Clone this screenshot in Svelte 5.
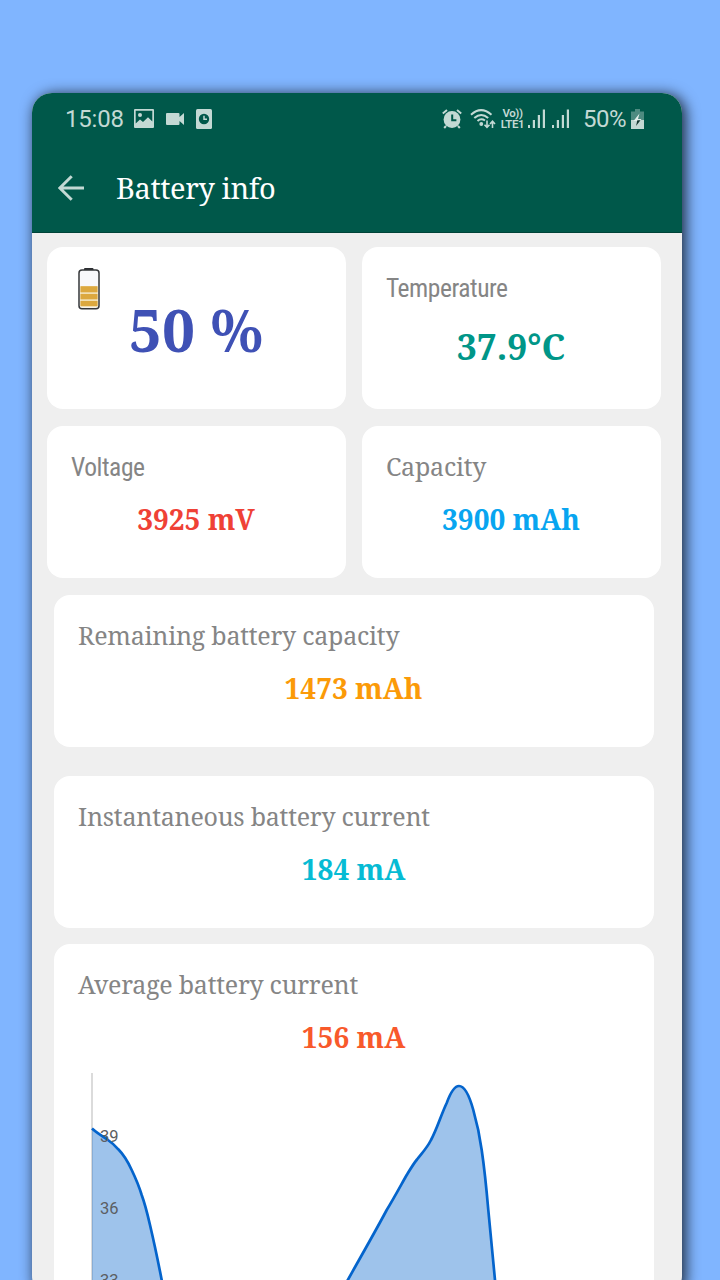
<script>
  // Battery info screen: status bar, app bar, metric cards and the current history chart.
  const small = [
    { label: "Voltage", value: "3925 mV", color: "#ef4136", condensed: true },
    { label: "Capacity", value: "3900 mAh", color: "#08a5f0" },
  ];
  const wide = [
    { label: "Remaining battery capacity", value: "1473 mAh", color: "#fb9a08", gap: 29 },
    { label: "Instantaneous battery current", value: "184 mA", color: "#06bbd4", gap: 16 },
  ];

  const ticks = [
    { y: 69.5, text: "39" },
    { y: 141.5, text: "36" },
    { y: 213.5, text: "33" },
  ];
  const left =
    "M38,56.5 C43,61 48,64 52.7,67 C57,70 61,73.5 64.3,77.3 C70,83 74,90 77.7,98 " +
    "C82,107 85,114 87.7,123 C91,132 93.5,142 96,153 C100,170 104,189 107.7,208 L110.3,222";
  const peak =
    "M286,222 C302,193 320,162 332.7,138 C340,126 347,113 352.7,103 C357,96 360,91 363,87.5 " +
    "C368,81 373,76 377,68 C383,57 387,43 392.7,31 C396,22 400,14 405,14 " +
    "C411,14 416,26 419.3,38 C423,51 425.5,62 427.7,78 C430.5,97 432.5,117 434.3,138 " +
    "C437,165 439,187 441,208 L442,222";
</script>

<div class="stage">
  <div class="phone">
    <header>
      <div class="status">
        <span class="clock">15:08</span>
        <svg class="picture" width="20" height="19" viewBox="0 0 20 19">
          <path fill-rule="evenodd" d="M1,0 H19 Q20,0 20,1 V18 Q20,19 19,19 H1 Q0,19 0,18 V1 Q0,0 1,0 Z M1.7,1.7 V14.5 L6,10.5 L9,13 L14,8.3 L18.3,12.6 V1.7 Z" />
          <circle cx="6" cy="6" r="2" />
        </svg>
        <svg class="video" width="18" height="14" viewBox="0 0 18 14">
          <path d="M1,1 H12.5 Q13.5,1 13.5,2 V5 L18,1 V13 L13.5,9 V12 Q13.5,13 12.5,13 H1 Q0,13 0,12 V2 Q0,1 1,1 Z" />
        </svg>
        <svg class="timer" width="16" height="20" viewBox="0 0 16 20">
          <rect width="16" height="20" rx="1.5" />
          <circle class="cut" cx="8" cy="10" r="5.2" />
          <path class="line" d="M8,6.8 V10.2 H11" stroke-width="1.5" />
        </svg>
        <span class="spacer"></span>
        <svg class="alarm" width="20" height="20" viewBox="0 0 20 20">
          <circle cx="10" cy="10.5" r="8.4" />
          <path class="line" d="M.8,4.5 L5,1 M15,1 L19.2,4.5 M4,17 L2.2,19 M16,17 L17.8,19" stroke-width="2" />
          <path class="cutline" d="M10.2,5.5 V11.2 H14.4" stroke-width="2" />
        </svg>
        <svg class="wifi" width="26" height="20" viewBox="0 0 26 20">
          <path class="line" d="M1,5.7 Q11,-3.5 21.5,5.7 M4.3,9.1 Q11.2,2.8 18.2,9.1 M7.5,12 Q11,8.8 15,11.5" stroke-width="2" />
          <circle cx="11.3" cy="15" r="1.9" />
          <path class="line" d="M17,11.5 V18 M14.5,15.7 L17,18.4 L19.5,15.7 M22.5,19 V12.5 M20,15 L22.5,12.3 L25,15" stroke-width="1.6" />
        </svg>
        <span class="volte"><span>Vo))</span><span>LTE1</span></span>
        <svg class="signal" width="17" height="19" viewBox="0 0 17 19">
          <path d="M0,16 h2 v3 h-2z M4.8,11 h2.2 v8 h-2.2z M9.8,6 h2.2 v13 h-2.2z M14.8,0.5 h2.2 v18.5 h-2.2z" />
        </svg>
        <svg class="signal two" width="17" height="19" viewBox="0 0 17 19">
          <path d="M0,16 h2 v3 h-2z M4.8,11 h2.2 v8 h-2.2z M9.8,6 h2.2 v13 h-2.2z M14.8,0.5 h2.2 v18.5 h-2.2z" />
        </svg>
        <span class="percent">50%</span>
        <svg class="charge" width="13" height="20" viewBox="0 0 13 20">
          <path opacity=".4" d="M4,0 H9 V2.5 H13 V11 H0 V2.5 H4 Z" />
          <path d="M0,11 H13 V20 H0 Z" />
          <path fill="#e4efec" d="M8.5,4.5 L2.5,12 H6 L5,17 L10.5,10 H7 Z" />
          <path fill="#12352e" d="M6.4,11.2 H9.5 L5,17 L6,12.5 Z" />
        </svg>
      </div>
      <div class="appbar">
        <svg width="26" height="26" viewBox="0 0 26 26">
          <path class="line" d="M26,13 H2 M13.7,1.2 L1.8,13 L13.7,24.8" stroke-width="3" />
        </svg>
        <h1>Battery info</h1>
      </div>
    </header>

    <main>
      <div class="grid">
        <section class="card tall level">
          <svg class="battery" width="22" height="42" viewBox="0 0 22 42">
            <rect x="6" y="0" width="9.5" height="3" rx="1" fill="#2c2e31" />
            <rect x="1" y="2" width="20" height="38.7" rx="3" fill="#f8f8fb" stroke="#35373a" stroke-width="1.5" />
            <rect x="2.3" y="18" width="17.4" height="21.3" rx="1" fill="#f1dfb4" />
            <path fill="#dca83f" d="M2.5,18.3 h17 v6 h-17z M2.5,26 h17 v5.2 h-17z M2.5,33 h17 v5 h-17z" />
          </svg>
          <div class="value">50 %</div>
        </section>
        <section class="card tall temp">
          <div class="label condensed">Temperature</div>
          <div class="value">37.9°C</div>
        </section>
        {#each small as m (m.label)}
          <section class="card">
            <div class="label" class:condensed={m.condensed}>{m.label}</div>
            <div class="value" style="color:{m.color}">{m.value}</div>
          </section>
        {/each}
      </div>

      <div class="list">
        {#each wide as m (m.label)}
          <section class="card" style="margin-bottom:{m.gap}px">
            <div class="label">{m.label}</div>
            <div class="value" style="color:{m.color}">{m.value}</div>
          </section>
        {/each}
        <section class="card average">
          <div class="label">Average battery current</div>
          <div class="value">156 mA</div>
          <svg class="chart" width="600" height="222" viewBox="0 0 600 222">
            <path class="axis" d="M38,1 V222" />
            <path class="area" d="{left} H38 Z {peak} Z" />
            <path class="curve" d="{left} {peak}" />
            {#each ticks as t (t.text)}
              <text x="46" y={t.y}>{t.text}</text>
            {/each}
          </svg>
        </section>
      </div>
    </main>
  </div>
</div>

<style>
  :global(body) {
    background: #80b5ff;
  }
  .stage {
    box-sizing: border-box;
    width: 720px;
    height: 1280px;
    padding: 93px 38px 0 32px;
    overflow: hidden;
    background: #80b5ff;
    font-family: "Noto Serif", "Droid Serif", "DejaVu Serif Condensed", "DejaVu Serif", serif;
  }
  .phone {
    height: 1203px;
    border-radius: 20px;
    overflow: hidden;
    background: #efefef;
    box-shadow: 3px 2px 14px 1px rgba(0, 0, 0, 0.75);
  }
  header {
    box-sizing: border-box;
    height: 140px;
    background: #00584a;
    border-bottom: 1px solid #004338;
    color: #c3d9d4;
    fill: #c3d9d4;
  }
  svg {
    display: block;
    flex: none;
  }
  .line {
    fill: none;
    stroke: #c3d9d4;
  }
  .cut {
    fill: #00584a;
  }
  .cutline {
    fill: none;
    stroke: #00584a;
  }
  .status {
    display: flex;
    align-items: center;
    height: 51px;
    padding: 0 38px 0 33px;
    font-family: Roboto, sans-serif;
    font-size: 24px;
  }
  .clock {
    width: 69px;
    font-size: 24px;
    letter-spacing: -0.2px;
    white-space: nowrap;
  }
  .video {
    margin-left: 12px;
  }
  .timer {
    margin-left: 12px;
  }
  .spacer {
    flex: 1;
  }
  .wifi {
    margin-left: 8px;
  }
  .volte {
    display: flex;
    flex-direction: column;
    align-items: center;
    width: 25px;
    margin-left: 4px;
    font-size: 11.5px;
    font-weight: 600;
    line-height: 11px;
    letter-spacing: -0.4px;
  }
  .signal {
    margin-left: 3px;
  }
  .signal.two {
    margin-left: 7px;
  }
  .percent {
    width: 44px;
    margin-left: 14px;
    letter-spacing: -0.5px;
    white-space: nowrap;
  }
  .charge {
    margin-left: 4px;
  }
  .appbar {
    display: flex;
    align-items: center;
    height: 88px;
    padding-left: 26px;
  }
  h1 {
    margin: 0 0 0 32px;
    color: #fff;
    font-size: 29px;
    font-weight: 400;
    line-height: 40px;
    letter-spacing: -0.4px;
    white-space: nowrap;
  }
  main {
    padding: 14px 21px 0 15px;
  }
  .grid {
    display: grid;
    grid-template-columns: 299px 299px;
    gap: 17px 16px;
  }
  .list {
    padding: 17px 7px 0;
  }
  .card {
    box-sizing: border-box;
    height: 152px;
    padding-top: 22px;
    border-radius: 16px;
    background: #fff;
  }
  .tall {
    height: 162px;
  }
  .label {
    height: 37px;
    padding-left: 24px;
    color: #858585;
    font-size: 25px;
    line-height: 36px;
    letter-spacing: -0.24px;
    white-space: nowrap;
  }
  .label.condensed {
    font-family: "Roboto Condensed", Roboto, sans-serif;
    font-stretch: condensed;
    font-size: 25.5px;
    letter-spacing: -0.45px;
    line-height: 39px;
  }
  .value {
    margin-top: 14px;
    padding-right: 1px;
    font-size: 28px;
    font-weight: 700;
    line-height: 40px;
    text-align: center;
    white-space: nowrap;
  }
  .level {
    padding-top: 21px;
  }
  .level .battery {
    margin-left: 31px;
  }
  .level .value {
    margin-top: -16px;
    color: #3f51b5;
    font-size: 58.5px;
    line-height: 70px;
  }
  .temp .value {
    color: #009688;
    font-size: 35.5px;
    margin-top: 20px;
  }
  .average {
    height: 400px;
  }
  .average .value {
    color: #f8592b;
  }
  .chart {
    margin-top: 15px;
  }
  .axis {
    stroke: #cfcfcf;
    stroke-width: 1.5;
  }
  .area {
    fill: #0464cc;
    fill-opacity: 0.39;
  }
  .curve {
    fill: none;
    stroke: #0464cc;
    stroke-width: 2.7;
  }
  .chart text {
    fill: #5b5e62;
    font-family: Roboto, sans-serif;
    font-size: 16.5px;
  }
</style>
